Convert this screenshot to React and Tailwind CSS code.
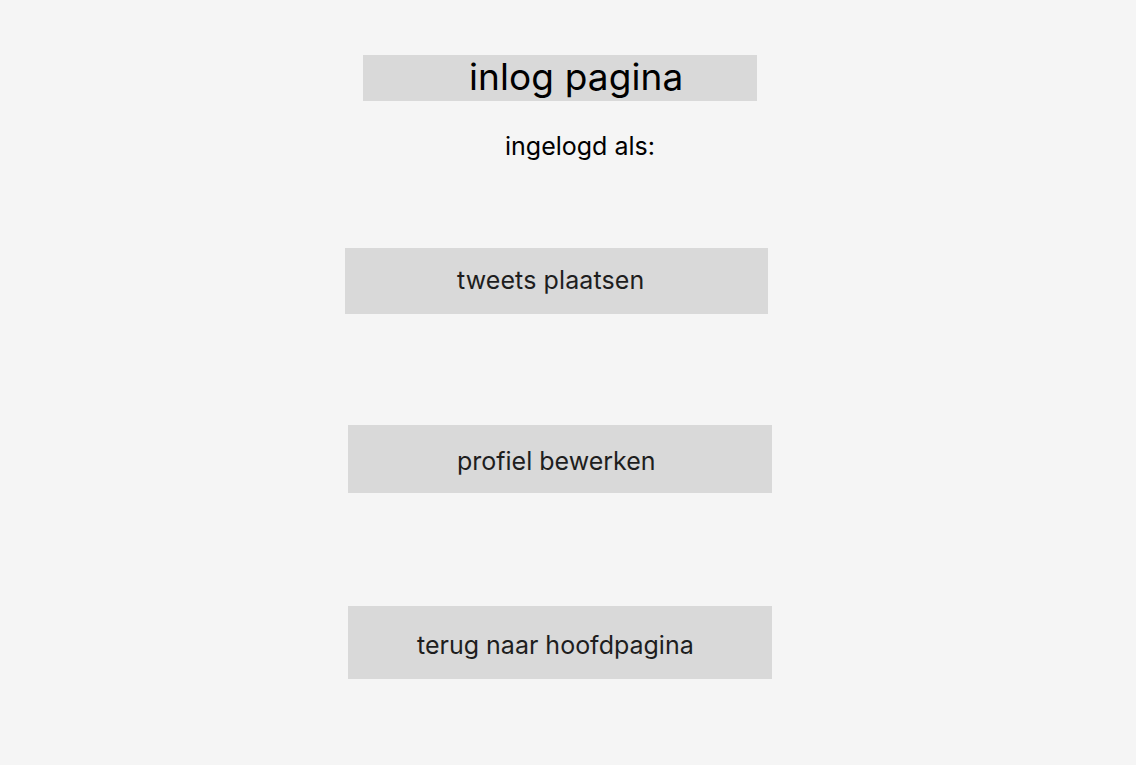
import React from 'react';

const Knop = ({ label, className }) => (
  <div className={`flex items-center bg-[#d9d9d9] text-[25px] text-[#1e1e1e] ${className}`}>
    {label}
  </div>
);

const App = () => {
  return (
    <div className="w-[1136px] h-[765px] bg-[#f5f5f5] font-['Inter',sans-serif] flex flex-col items-start pt-[55px] overflow-hidden">
      {/* Titel */}
      <div className="ml-[363px] w-[394px] h-[46px] bg-[#d9d9d9] pl-[106px] text-[37px] leading-[44px] tracking-[0.1px] text-black">
        inlog pagina
      </div>

      <p className="ml-[505px] mt-[29px] text-[25px] leading-[32px] text-black">ingelogd als:</p>

      {/* Knoppen */}
      <Knop label="tweets plaatsen" className="ml-[345px] mt-[86px] w-[423px] h-[66px] pl-[112px] tracking-[0.1px]" />
      <Knop label="profiel bewerken" className="ml-[348px] mt-[111px] w-[424px] h-[68px] pl-[109px] pt-[6px]" />
      <Knop label="terug naar hoofdpagina" className="ml-[348px] mt-[113px] w-[424px] h-[73px] pl-[69px] pt-[7px]" />
    </div>
  );
};

export default App;
